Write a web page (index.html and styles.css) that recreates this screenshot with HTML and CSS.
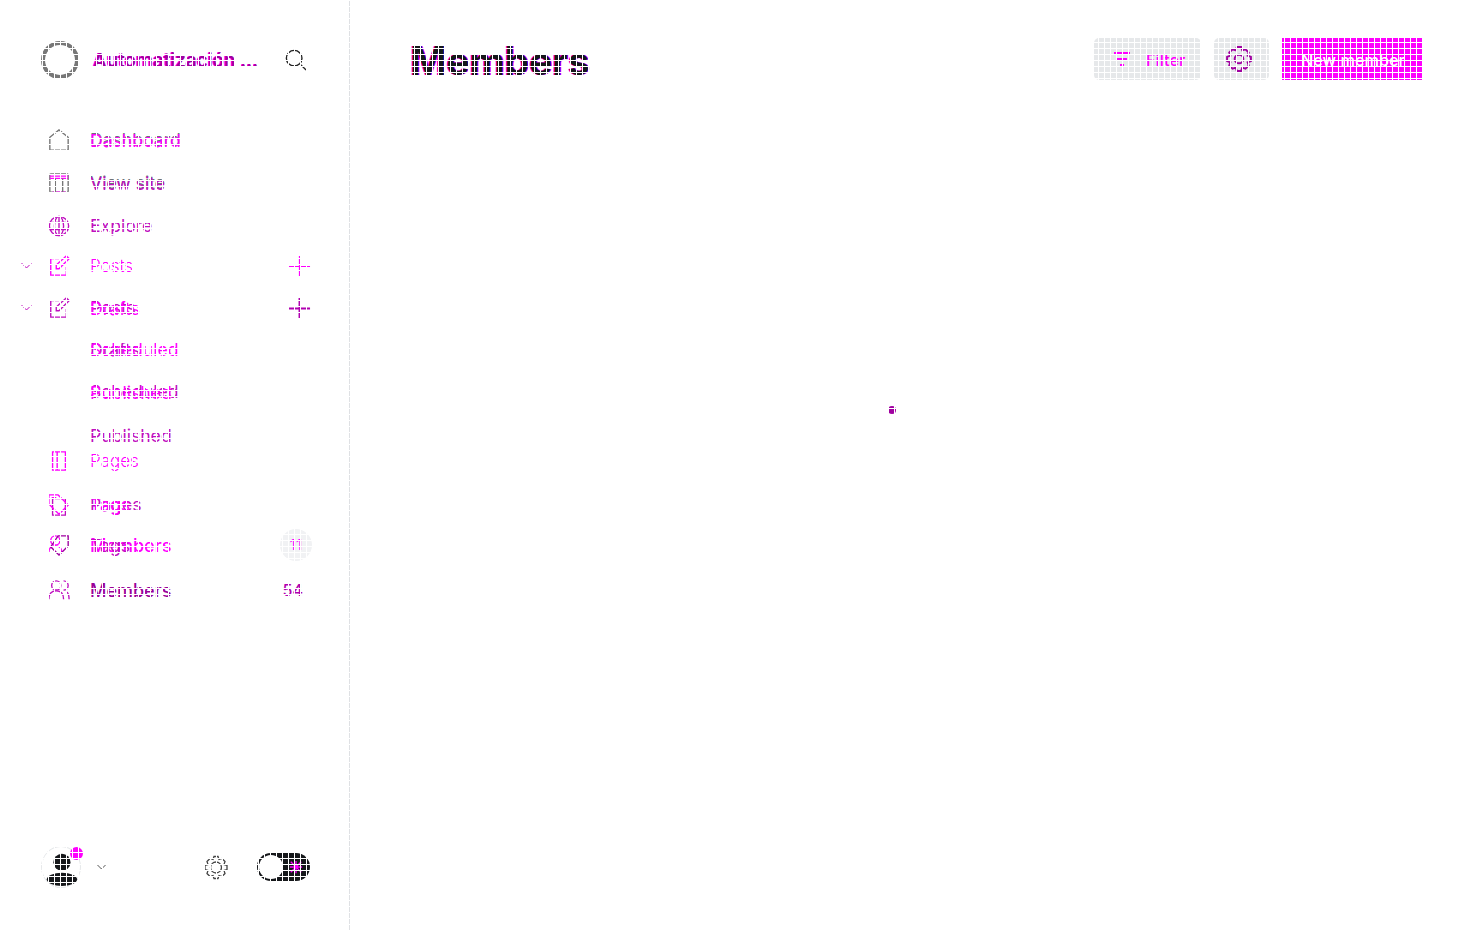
FILE: index.html
```html
<!DOCTYPE html>
<html lang="en">
<head>
    <meta charset="UTF-8">
    <meta name="viewport" content="width=device-width, initial-scale=1.0">
    <title>Members</title>
    <link rel="stylesheet" href="styles.css">
</head>
<body>

<aside class="sidebar">
    <div class="brand">
        <span class="brand-logo"></span>
        <span class="stack brand-name">
            <span class="tone-soft">Automatización ...</span>
            <span class="tone-dark shift">Automatización ...</span>
        </span>
        <svg class="search" viewBox="0 0 24 24"><circle cx="10" cy="10" r="8.500"/><path d="M16.500 16.500 23 23"/></svg>
    </div>

    <nav class="nav">
        <a class="nav-row">
            <svg class="icon icon-grey" viewBox="0 0 24 24"><path d="M2 23V9L12 1l10 8v14z"/></svg>
            <span class="stack"><span class="tone-grey">Dashboard</span><span class="tone-hot shift-down">Dashboard</span></span>
        </a>
        <a class="nav-row">
            <svg class="icon icon-grey" viewBox="0 0 24 24"><rect x="2" y="2" width="20" height="20" rx="1"/><path class="hot" d="M2 7h20M2 4.500h20M5 22h14"/><path d="M8 7v15M16 7v15"/></svg>
            <span class="stack"><span class="tone-grey">View site</span><span class="tone-mid shift-down">View site</span></span>
        </a>
        <a class="nav-row">
            <svg class="icon icon-mid" viewBox="0 0 24 24"><circle cx="12" cy="12" r="10.500"/><ellipse cx="12" cy="12" rx="5" ry="10.500"/><path d="M2 8h20M2 16h20M12 1v22"/></svg>
            <span class="stack"><span class="tone-mid">Explore</span></span>
        </a>
        <a class="nav-row">
            <svg class="chev" viewBox="0 0 12 8"><path d="M1 1l5 5 5-5"/></svg>
            <svg class="icon icon-hot" viewBox="0 0 24 24"><path d="M12 4H3v18h17v-9"/><path d="M9 15v-4L20 1l3 3-11 11z"/></svg>
            <span class="stack"><span class="tone-thin">Posts</span></span>
            <svg class="plus plus-hot" viewBox="0 0 24 24"><path d="M12 1v22M1 12h22"/></svg>
        </a>
        <a class="nav-row">
            <svg class="chev" viewBox="0 0 12 8"><path d="M1 1l5 5 5-5"/></svg>
            <svg class="icon icon-mid" viewBox="0 0 24 24"><path d="M12 4H3v18h17v-9"/><path d="M9 15v-4L20 1l3 3-11 11z"/></svg>
            <span class="stack"><span class="tone-mid">Posts</span><span class="tone-hot shift-down">Drafts</span></span>
            <svg class="plus plus-mid" viewBox="0 0 24 24"><path d="M12 1v22M1 12h22"/></svg>
        </a>
        <a class="nav-row">
            <span class="stack"><span class="tone-mid">Drafts</span><span class="tone-hot">Scheduled</span></span>
        </a>
        <a class="nav-row">
            <span class="stack"><span class="tone-mid">Scheduled</span><span class="tone-hot shift-down">Published</span></span>
        </a>
        <a class="nav-row">
            <span class="stack"><span class="tone-mid shift-down">Published</span></span>
        </a>
        <a class="nav-row">
            <svg class="icon icon-hot" viewBox="0 0 24 24"><path d="M5 2h14v20H5zM10 2v20"/></svg>
            <span class="stack"><span class="tone-thin">Pages</span></span>
        </a>
        <a class="nav-row">
            <svg class="icon icon-mid" viewBox="0 0 24 24"><path d="M5 5h14v18H5z"/><path class="hot" d="M1 1h10l11 11-10 10L1 11z"/><path class="hot" d="M4 4h5"/></svg>
            <span class="stack"><span class="tone-mid">Pages</span><span class="tone-hot">Tags</span></span>
        </a>
        <a class="nav-row">
            <svg class="icon icon-hot" viewBox="0 0 24 24"><circle cx="8" cy="7" r="5"/><path d="M1 20c0-5 3-7 7-7s7 2 7 7"/><path class="mid" d="M12 23l-9-9 8-12h11v11z"/></svg>
            <span class="stack"><span class="tone-strong shift-down">Members</span><span class="tone-mid shift-down">Tags</span></span>
            <span class="badge">11</span>
        </a>
        <a class="nav-row">
            <svg class="icon icon-mid" viewBox="0 0 24 24"><circle cx="9" cy="7" r="5"/><path d="M1 22c0-6 3-9 8-9s8 3 8 9"/><path d="M17 2a5 5 0 0 1 0 10M20 14c2 1 3 4 3 8"/></svg>
            <span class="stack"><span class="tone-deep shift-down">Members</span></span>
            <span class="count">54</span>
        </a>
    </nav>

    <div class="user-bar">
        <span class="avatar">
            <svg viewBox="0 0 40 42"><circle cx="21" cy="16" r="9"/><ellipse cx="21" cy="34" rx="16" ry="7"/></svg>
            <span class="avatar-dot"></span>
        </span>
        <svg class="user-chev" viewBox="0 0 12 8"><path d="M1 1l5 5 5-5"/></svg>
        <svg class="gear" viewBox="0 0 24 24"><circle cx="12" cy="12" r="5.500"/><path d="M10 1h4l1 3 3-1 3 3-1 3 3 1v4l-3 1 1 3-3 3-3-1-1 3h-4l-1-3-3 1-3-3 1-3-3-1v-4l3-1-1-3 3-3 3 1z"/></svg>
        <span class="toggle">
            <span class="knob"></span>
            <svg class="moon" viewBox="0 0 16 16"><path d="M2 2l12 12M14 2L2 14M8 1v14M1 8h14"/></svg>
        </span>
    </div>
</aside>

<main class="main">
    <header class="page-head">
        <h1 class="page-title">Members</h1>
        <div class="actions">
            <button class="btn btn-light btn-filter">
                <svg class="btn-icon" viewBox="0 0 18 14"><path d="M1 1h16M4 7h10M7 13h4"/></svg>
                <span class="btn-label">Filter</span>
            </button>
            <button class="btn btn-light btn-square">
                <svg class="btn-icon gear-mid" viewBox="0 0 24 24"><circle cx="12" cy="12" r="4"/><path d="M10 1h4l1 3 3-1 3 3-1 3 3 1v4l-3 1 1 3-3 3-3-1-1 3h-4l-1-3-3 1-3-3 1-3-3-1v-4l3-1-1-3 3-3 3 1z"/></svg>
            </button>
            <button class="btn btn-hot"><span class="btn-label">New member</span></button>
        </div>
    </header>
    <div class="loader"></div>
</main>

<div class="grid-lines"></div>

</body>
</html>
```

FILE: styles.css
```css
* {
    box-sizing: border-box;
}

body {
    background-color: #fff;
    color: #15171a;
    font-family: Inter, "Liberation Sans", sans-serif;
    margin: 0;
    height: 100vh;
    display: flex;
    overflow: hidden;
}

/* white 1px lines every 6px, lies over the whole page */
.grid-lines {
    position: fixed;
    inset: 0;
    pointer-events: none;
    background-image:
        linear-gradient(to right, #fff 1px, transparent 1px),
        linear-gradient(to bottom, #fff 1px, transparent 1px);
    background-size: 6px 6px;
}

.sidebar {
    width: 350px;
    flex: none;
    border-right: 1px solid #dfe1e4;
    display: flex;
    flex-direction: column;
    padding-top: 41px;
}

.brand {
    display: flex;
    align-items: center;
    height: 38px;
    padding-left: 41px;
}

.brand-logo {
    width: 38px;
    height: 38px;
    border: 4px solid #777;
    border-radius: 50%;
    flex: none;
    margin-right: 13px;
}

.brand-name {
    font-size: 18.800px;
    font-weight: 600;
    width: 180px;
}

.search {
    width: 22px;
    height: 22px;
    fill: none;
    stroke: #222;
    stroke-width: 1.500;
    margin-left: 13px;
}

.nav {
    display: grid;
    grid-template-rows: 43px 43px 40px 42px 42px 42px 43px 26px 44px 40px 45px 24px;
    margin-top: 49px;
}

.nav-row {
    display: grid;
    grid-template-columns: 48px 42px 1fr 64px;
    grid-template-rows: 24px;
    height: 24px;
    align-items: center;
    font-size: 17.600px;
    line-height: 24px;
    padding-right: 38px;
}

.stack {
    grid-column: 3;
    display: grid;
    white-space: nowrap;
}

.stack > span {
    grid-area: 1 / 1;
}

.shift {
    transform: translateX(1px);
}

.shift-down {
    transform: translateY(1px);
}

.tone-grey {
    color: #6c7278;
}

.tone-hot {
    color: #f0f;
}

.tone-thin {
    color: #f0f;
    font-size: 17px;
    font-weight: 300;
}

.tone-strong {
    color: #f0f;
    font-size: 18px;
    font-weight: 500;
}

.tone-mid {
    color: #c010c0;
}

.tone-deep {
    color: #909;
    font-size: 18px;
    font-weight: 500;
}

.tone-soft {
    color: #f0f;
}

.tone-dark {
    color: #a000a0;
}

.icon {
    grid-column: 2;
    grid-row: 1;
    width: 22px;
    height: 22px;
    fill: none;
    stroke-width: 1.500;
}

.icon-grey {
    stroke: #777;
}

.icon-hot {
    stroke: #f0f;
}

.icon-mid {
    stroke: #c010c0;
}

.icon .hot {
    stroke: #f0f;
}

.icon .mid {
    stroke: #a000a0;
}

.chev {
    grid-column: 1;
    grid-row: 1;
    width: 13px;
    height: 8px;
    margin-left: 20px;
    fill: none;
    stroke: #c010c0;
    stroke-width: 1;
}

.plus {
    grid-column: 4;
    grid-row: 1;
    width: 23px;
    height: 23px;
    justify-self: end;
    fill: none;
    stroke-width: 1.300;
}

.plus-hot {
    stroke: #f0f;
}

.plus-mid {
    stroke: #b000b0;
    stroke-width: 2;
}

.badge {
    grid-column: 4;
    grid-row: 1;
    justify-self: end;
    margin-right: -1px;
    width: 32px;
    height: 32px;
    border-radius: 50%;
    background-color: #f1f2f4;
    color: #f0f;
    font-size: 15px;
    font-weight: 500;
    line-height: 32px;
    text-align: center;
}

.count {
    grid-column: 4;
    grid-row: 1;
    justify-self: end;
    margin-right: 8px;
    font-size: 16px;
    font-weight: 500;
    color: #b000b0;
}

.user-bar {
    margin-top: auto;
    margin-bottom: 43px;
    height: 42px;
    display: flex;
    align-items: center;
    padding-left: 41px;
}

.avatar {
    position: relative;
    width: 40px;
    height: 42px;
    border: 1px solid #e6e8ea;
    border-radius: 50%;
    flex: none;
}

.avatar svg {
    display: block;
    width: 100%;
    height: 100%;
    fill: #15171a;
}

.avatar-dot {
    position: absolute;
    top: 0;
    right: -3px;
    width: 13px;
    height: 13px;
    border-radius: 50%;
    background-color: #f0f;
}

.user-chev {
    width: 13px;
    height: 8px;
    margin-left: 14px;
    fill: none;
    stroke: #555;
    stroke-width: 1;
}

.gear {
    width: 24px;
    height: 25px;
    margin-left: 96px;
    fill: none;
    stroke: #444;
    stroke-width: 1.300;
}

.toggle {
    display: flex;
    align-items: center;
    justify-content: space-between;
    width: 53px;
    height: 28px;
    margin-left: 29px;
    padding: 2px 7px 2px 2px;
    border-radius: 14px;
    background-color: #15171a;
}

.knob {
    width: 24px;
    height: 24px;
    border-radius: 50%;
    background-color: #fff;
}

.moon {
    width: 14px;
    height: 14px;
    fill: none;
    stroke: #f0f;
    stroke-width: 1.500;
}

.main {
    flex: 1;
    padding: 38px 61px 0 60px;
}

.page-head {
    display: flex;
    justify-content: space-between;
    align-items: center;
    height: 42px;
}

.page-title {
    margin: 2px 0 0;
    font-size: 39px;
    font-weight: 700;
    letter-spacing: -0.200px;
    color: #15171a;
    text-shadow: 1px 0 #f0f, -1px 0 #f0f;
}

.actions {
    display: flex;
    gap: 13px;
}

.btn {
    display: flex;
    align-items: center;
    gap: 15px;
    height: 42px;
    padding: 0 19px;
    border: none;
    border-radius: 5px;
    font-family: inherit;
    font-size: 16.300px;
    font-weight: 500;
    white-space: nowrap;
}

.btn-label {
    padding-top: 2px;
}

.btn-filter {
    width: 107px;
    padding: 0 0 0 19px;
}

.btn-light {
    background-color: #e6e8ea;
    color: #f0f;
}

.btn-square {
    width: 55px;
    padding: 0 13px 0 12px;
}

.btn-hot {
    width: 140px;
    background-color: #f0f;
    color: #fff;
    border-radius: 0;
}

.btn-icon {
    width: 18px;
    height: 14px;
    fill: none;
    stroke: #f0f;
    stroke-width: 2;
}

.gear-mid {
    width: 26px;
    height: 26px;
    stroke: #a000a0;
    stroke-width: 1.800;
}

.loader {
    width: 8px;
    height: 8px;
    margin: 326px 0 0 478px;
    border-radius: 50%;
    background-color: #a000a0;
}
```
